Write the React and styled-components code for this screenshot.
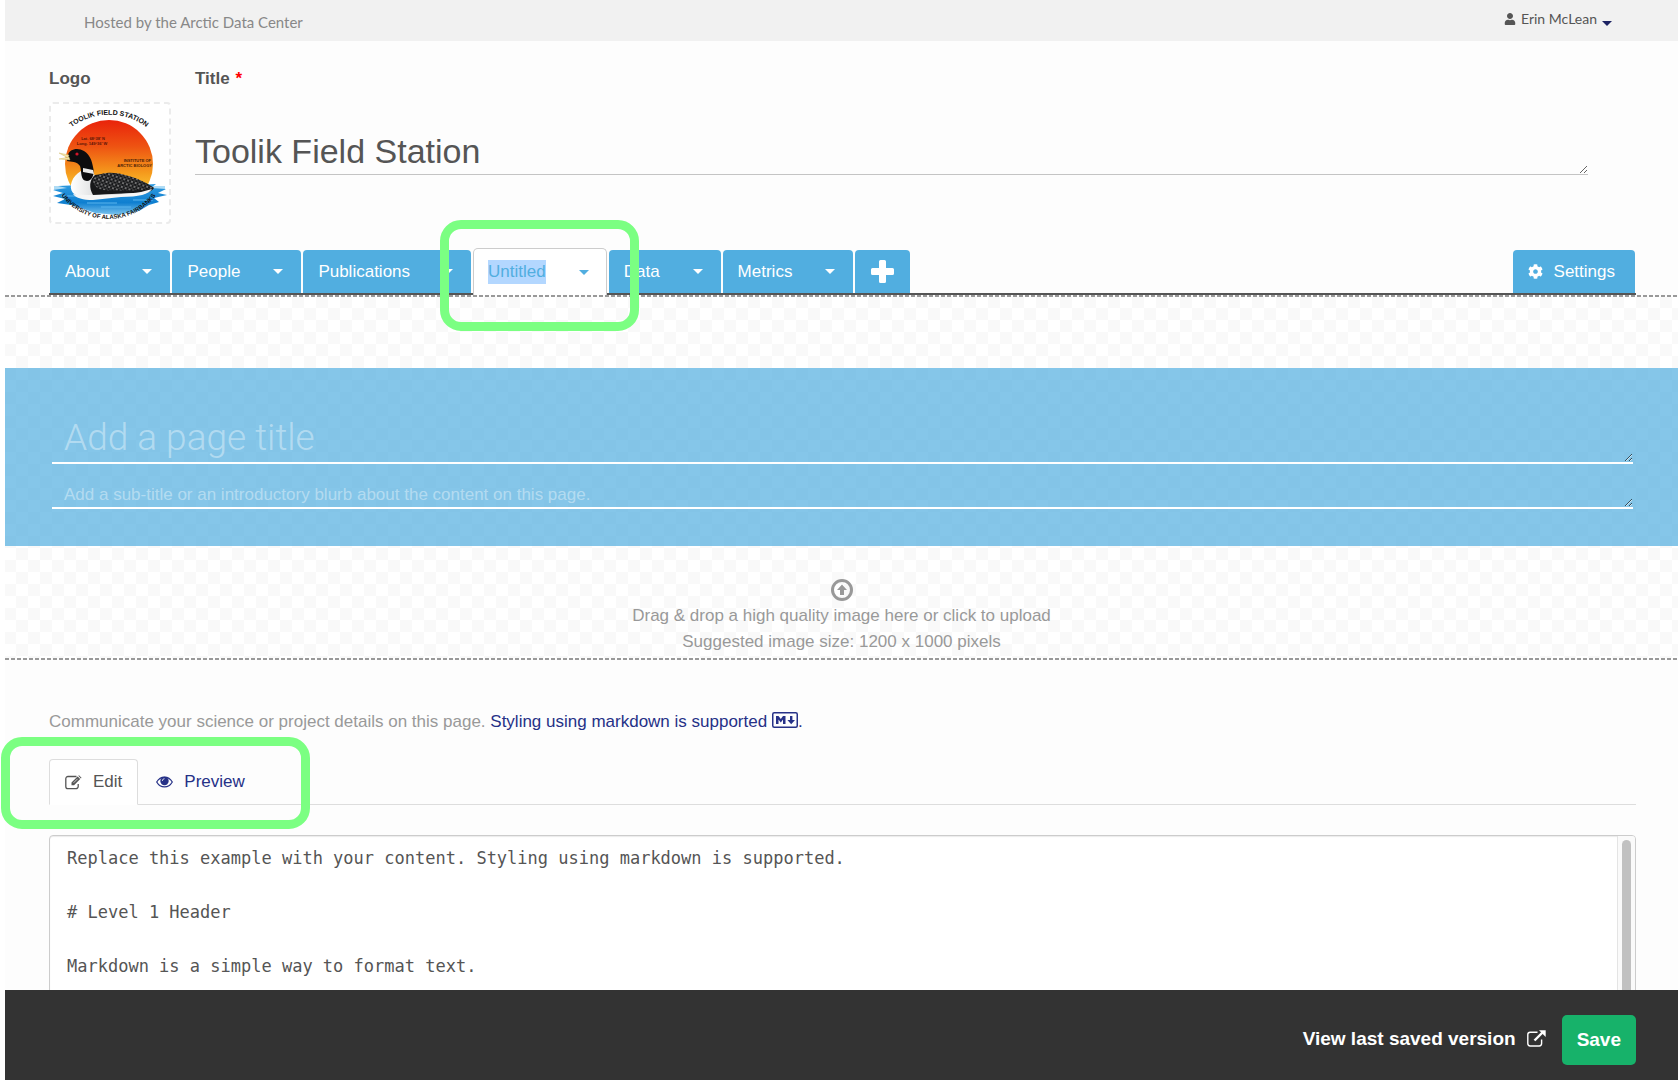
import React from "react";
import styled, { createGlobalStyle, css } from "styled-components";
import { FaUser, FaCog } from "react-icons/fa";

const sans = `"Liberation Sans", Arial, sans-serif`;
const humanist = `Lato, "Open Sans", sans-serif`;
const blue = "#51aee0";
const ink = "#555555";
const navy = "#263187";

const GlobalStyle = createGlobalStyle`
  *, *::before, *::after { box-sizing: border-box; }
  body {
    margin: 0;
    background: #fff;
    color: ${ink};
    font: 17px/24px ${sans};
  }
  button, textarea { font: inherit; }
  a { text-decoration: none; }
`;

const dashedLine = css`
  background-image: repeating-linear-gradient(90deg, #999 0 4px, transparent 4px 6px);
`;

const Page = styled.div`
  display: flex;
  flex-direction: column;
  height: 100vh;
  margin-left: 5px;
  background: #fdfdfd;
`;

const TopBar = styled.header`
  display: flex;
  flex: none;
  justify-content: space-between;
  align-items: center;
  height: 41px;
  padding: 0 66px 0 79px;
  background: #f1f1f1;
  font-family: ${humanist};
`;

const HostNote = styled.span`
  padding-top: 3px;
  font-size: 15px;
  color: #888;
`;

const UserMenu = styled.button`
  display: flex;
  align-items: center;
  gap: 5px;
  padding: 0 0 3px;
  border: 0;
  background: none;
  color: ${ink};
  font-size: 14px;
  line-height: 20px;
`;

const Caret = styled.span`
  width: 0;
  height: 0;
  border: 5px solid transparent;
  border-top-color: ${(p) => p.$color || "#fff"};
  border-bottom: 0;
  ${(p) => p.$low && "margin-top: 8px;"}
`;

const Main = styled.main`
  flex: 1;
  min-height: 0;
  margin-left: -5px;
  padding-left: 5px;
  overflow-y: auto;
  scrollbar-width: none;
`;

const Identity = styled.section`
  display: grid;
  grid-template-columns: 122px 1fr;
  column-gap: 24px;
  padding: 26px 90px 0 44px;
`;

const Field = styled.div`
  display: flex;
  flex-direction: column;
  gap: 11px;
`;

const Label = styled.label`
  font-weight: bold;
`;

const Required = styled.span`
  margin-left: 1px;
  color: #f00;
`;

const LogoDrop = styled.button`
  width: 122px;
  height: 122px;
  padding: 0;
  border: 2px dashed #ebebeb;
  border-radius: 4px;
  background: #fff;
  svg { display: block; width: 118px; height: 118px; }
`;

const TitleInput = styled.textarea`
  display: block;
  width: 100%;
  height: 73px;
  padding: 29px 0 0;
  border: 0;
  border-bottom: 1px solid #c4c4c4;
  background: transparent;
  color: ${ink};
  font-size: 34px;
  line-height: 40px;
  overflow: hidden;
  outline: 0;
  resize: vertical;
`;

const TabBar = styled.nav`
  display: flex;
  align-items: flex-end;
  gap: 2px;
  margin: 24px 42px 0 44px;
  padding: 0 1px;
  border-bottom: 2px solid #555;
`;

const Tab = styled.div`
  position: relative;
  display: flex;
  align-items: center;
  height: 43px;
  border-radius: 4px 4px 0 0;
  background: ${blue};
  color: #fff;
  ${(p) =>
    p.$active &&
    css`
      height: 47px;
      margin-bottom: -2px;
      border: 1px solid #ccc;
      border-bottom: 0;
      border-radius: 5px 5px 0 0;
      background: #fff;
      color: ${blue};
    `}
`;

const TabLink = styled.a`
  padding-left: ${(p) => (p.$active ? 14 : 15)}px;
  color: inherit;
`;

const Selected = styled.span`
  display: block;
  background: #b3d7ff;
`;

const TabToggle = styled.button`
  display: flex;
  align-items: center;
  height: 100%;
  padding: 0 ${(p) => (p.$active ? 17 : 18)}px 0 33px;
  border: 0;
  background: none;
`;

const TabAction = styled.button`
  display: flex;
  align-items: center;
  justify-content: center;
  gap: 11px;
  height: 43px;
  padding: ${(p) => (p.$push ? "0 20px 0 15px" : "0 16px")};
  ${(p) => p.$push && "margin-left: auto;"}
  border: 0;
  border-radius: 4px 4px 0 0;
  background: ${blue};
  color: #fff;
`;

const Highlight = styled.span`
  position: absolute;
  z-index: 2;
  border: 9px solid #7bff82;
  border-radius: 21px;
  pointer-events: none;
  ${(p) =>
    p.$tab
      ? "inset: -29px -33px -36px -34px;"
      : "left: -48px; top: -22px; width: 309px; height: 92px;"}
`;

const Hero = styled.section`
  padding-top: 71px;
  background: repeating-conic-gradient(#f9f9f9 0 25%, #fff 0 50%) 11px -1px / 24px 24px;
`;

const DashedRule = styled.div`
  height: 2px;
  ${dashedLine}
`;

const Banner = styled.div`
  display: flex;
  flex-direction: column;
  height: 178px;
  padding: 40px 45px 0 47px;
  background: rgba(81, 174, 224, 0.7);
`;

const BannerInput = styled.textarea`
  display: block;
  width: 100%;
  border: 0;
  border-bottom: 2px solid #fff;
  background: transparent;
  color: #fff;
  overflow: hidden;
  outline: 0;
  resize: vertical;
  &::placeholder { color: rgba(255, 255, 255, 0.4); opacity: 1; }
  ${(p) =>
    p.$large
      ? css`
          height: 56px;
          padding: 7px 12px 0;
          font: 300 37px/46px Roboto, ${sans};
        `
      : css`
          height: 45px;
          padding: 19px 12px 0;
          font-size: 17px;
          line-height: 24px;
        `}
`;

const Upload = styled.button`
  display: flex;
  flex-direction: column;
  align-items: center;
  width: 100%;
  padding: 33px 0 3px;
  border: 0;
  background: none;
  color: #999;
  line-height: 26px;
`;

const Content = styled.section`
  padding: 48px 42px 0 44px;
`;

const Help = styled.p`
  margin: 0;
  color: #999;
  line-height: 27px;
`;

const HelpLink = styled.a`
  color: ${navy};
  svg { vertical-align: -1px; }
`;

const EditorTabs = styled.div`
  position: relative;
  display: flex;
  margin: 24px 0 30px;
  border-bottom: 1px solid #ddd;
`;

const EditorTab = styled.button`
  display: flex;
  align-items: center;
  gap: 11px;
  height: 46px;
  margin-bottom: -1px;
  padding: 0 15px;
  border: 1px solid transparent;
  border-radius: 4px 4px 0 0;
  background: none;
  color: ${navy};
  ${(p) =>
    p.$active &&
    css`
      margin-right: 2px;
      border-color: #ddd;
      border-bottom-color: #fff;
      background: #fff;
      color: ${ink};
    `}
`;

const EditorFrame = styled.div`
  display: flex;
  height: 420px;
  border: 1px solid #ccc;
  border-radius: 4px;
  background: #fff;
  box-shadow: inset 0 1px 1px rgba(0, 0, 0, 0.08);
  overflow: hidden;
`;

const Editor = styled.textarea`
  flex: 1;
  padding: 9px 17px;
  border: 0;
  background: transparent;
  color: ${ink};
  font: 17px/27px "DejaVu Sans Mono", monospace;
  outline: 0;
  overflow-y: auto;
  scrollbar-width: none;
  resize: none;
`;

const ScrollTrack = styled.div`
  width: 18px;
  padding: 4px;
  border-left: 1px solid #e4e4e4;
  background: #fafafa;
`;

const ScrollThumb = styled.div`
  width: 9px;
  height: 60%;
  border-radius: 5px;
  background: #c1c1c1;
`;

const Footer = styled.footer`
  display: flex;
  flex: none;
  align-items: center;
  justify-content: flex-end;
  gap: 16px;
  height: 90px;
  padding: 10px 42px 0 0;
  background: #333;
  font-size: 19px;
  font-weight: bold;
`;

const SavedLink = styled.a`
  display: flex;
  align-items: center;
  gap: 11px;
  padding-bottom: 3px;
  color: #fff;
`;

const SaveButton = styled.button`
  height: 50px;
  padding: 0 15px;
  border: 0;
  border-radius: 5px;
  background: #17b26a;
  color: #fff;
`;

function StationLogo() {
  return (
    <svg viewBox="0 0 118 118" role="img" aria-label="Toolik Field Station logo">
      <defs>
        <linearGradient id="sun" x1="0" y1="0" x2="0" y2="1">
          <stop offset="0" stopColor="#e9230b" />
          <stop offset="0.3" stopColor="#ee5312" />
          <stop offset="0.6" stopColor="#f59a1c" />
          <stop offset="0.85" stopColor="#fbd23a" />
        </linearGradient>
        <linearGradient id="water" x1="0" y1="0" x2="0" y2="1">
          <stop offset="0" stopColor="#2f9be0" />
          <stop offset="0.6" stopColor="#0f7fd0" />
          <stop offset="1" stopColor="#7cc4ee" />
        </linearGradient>
        <linearGradient id="breast" x1="0" y1="0" x2="1" y2="0">
          <stop offset="0" stopColor="#ffffff" />
          <stop offset="1" stopColor="#8f9296" />
        </linearGradient>
        <pattern id="speckle" width="4" height="4" patternUnits="userSpaceOnUse" patternTransform="rotate(18)">
          <rect width="4" height="4" fill="#17181a" />
          <circle cx="1" cy="1" r="0.8" fill="#dcdcdc" />
          <circle cx="3" cy="3" r="0.6" fill="#a5a5a5" />
        </pattern>
        <path id="arcTop" d="M14 29 A62 62 0 0 1 102 29" />
        <path id="arcBottom" d="M5 83 A59 59 0 0 0 110 83" />
      </defs>
      <circle cx="58" cy="60" r="44" fill="url(#sun)" />
      <g>
        <path d="M3 82 H114 V86 H3 Z" fill="#7cc4ee" opacity="0.6" />
        <path d="M2 86 L16 84 L7 82 L30 81 L85 81 L105 80 L100 84 L115 85 L107 89 L116 91 L103 94 L108 98 L98 101 L88 107 L66 111 L44 109 L30 104 L20 101 L6 99 L14 95 L2 92 L12 89 Z" fill="url(#water)" />
        <path d="M10 92 H28 M82 96 H102 M36 99 H66 M50 103 H80" stroke="#5db6ee" strokeWidth="1" />
      </g>
      <path d="M30 67 C21 72 17 83 22 89 C29 95 42 94 56 93 L88 91 C96 90 101 87 103 83 L60 78 L42 70 Z" fill="url(#breast)" />
      <path d="M42 91 C38 84 38 76 44 71 C70 66 92 76 103 84 C100 89 90 89 80 89 Z" fill="#17181a" />
      <path d="M42 75 C48 68 62 67 74 71 C86 74 96 79 102 84 C92 87 68 87 52 86 C44 84 42 80 42 75 Z" fill="url(#speckle)" />
      <path d="M22 90 C36 92 70 91 90 88 L101 85 C98 90 88 93 70 93 L42 96 C32 96 25 94 22 90 Z" fill="#f6f6f6" />
      <path d="M17 51 C18 45 27 43 33 47 C39 51 41 57 42 63 C44 70 41 77 36 77 C29 77 31 68 29 62 C26 57 20 58 16 57 Z" fill="#0c0c0e" />
      <path d="M32 64 L42 66 L43 70 L32 68 Z" fill="#e9e9e9" />
      <path d="M8 49 L18 51 L17 54 Z M8 55 L18 53 L19 56 Z" fill="#f2e3a8" stroke="#c9b25a" strokeWidth="0.4" />
      <circle cx="26" cy="50" r="1.6" fill="#d4142a" />
      <g fontFamily="Liberation Sans, Arial, sans-serif" fontWeight="bold" fill="#111" textAnchor="middle">
        <text fontSize="7"><textPath href="#arcTop" startOffset="50%">TOOLIK FIELD STATION</textPath></text>
        <text fontSize="6"><textPath href="#arcBottom" startOffset="50%">UNIVERSITY OF ALASKA FAIRBANKS</textPath></text>
      </g>
      <g fontFamily="Liberation Sans, Arial, sans-serif" fontWeight="bold">
        <g fill="#5a1408" fontSize="4" textAnchor="middle">
          <text x="42" y="36">Lat. 68°38' N</text>
          <text x="41" y="41">Long. 149°36' W</text>
        </g>
        <g fill="#4a2008" fontSize="4" textAnchor="end">
          <text x="100" y="58">INSTITUTE OF</text>
          <text x="101" y="63">ARCTIC BIOLOGY</text>
        </g>
      </g>
    </svg>
  );
}

const UploadIcon = () => (
  <svg width="22" height="24" viewBox="0 0 22 24" aria-hidden="true">
    <circle cx="11" cy="11" r="9.5" fill="none" stroke="#999" strokeWidth="3" />
    <path d="M11 5.5 L16 11 H13 V16 H9 V11 H6 Z" fill="#999" />
  </svg>
);

const MarkdownIcon = () => (
  <svg width="26" height="16" viewBox="0 0 26 16" aria-label="Markdown">
    <rect x="0.75" y="0.75" width="24.5" height="14.5" rx="1.5" fill="none" stroke={navy} strokeWidth="1.5" />
    <path d="M4 12 V4 H6.5 L8.8 7 L11 4 H13.5 V12 H11 V7.6 L8.8 10.4 L6.5 7.6 V12 Z" fill={navy} />
    <path d="M18 4 H20.4 V8 H23 L19.2 12.3 L15.4 8 H18 Z" fill={navy} />
  </svg>
);

const EditIcon = () => (
  <svg width="17" height="15" viewBox="0 0 17 15" fill="none" stroke="currentColor" aria-hidden="true">
    <path d="M11.5 1.5 H3 A2.2 2.2 0 0 0 0.8 3.7 V11.5 A2.2 2.2 0 0 0 3 13.7 H11 A2.2 2.2 0 0 0 13.2 11.5 V9" strokeWidth="1.3" />
    <path d="M6.5 10.3 V7.6 L12.6 1.5 L15.2 4.1 L9.1 10.3 Z" fill="currentColor" stroke="none" />
    <path d="M13.3 0.8 L14 0.3 L16.5 2.8 L15.9 3.5 Z" fill="currentColor" stroke="none" />
    <path d="M8.6 7.8 L12.6 3.8" stroke="#fff" strokeWidth="0.7" />
  </svg>
);

const EyeIcon = () => (
  <svg width="17" height="12" viewBox="0 0 17 12" aria-hidden="true">
    <path d="M0.7 6 C4.5 -0.6 12.5 -0.6 16.3 6 C12.5 12.6 4.5 12.6 0.7 6 Z" fill="none" stroke="currentColor" strokeWidth="1.2" />
    <circle cx="8.5" cy="5" r="4.2" fill="currentColor" />
    <path d="M6.3 5 A2.3 2.3 0 0 1 8.5 2.7" fill="none" stroke="#fff" strokeWidth="0.8" />
  </svg>
);

const ExternalIcon = () => (
  <svg width="19" height="17" viewBox="0 0 19 17" fill="none" stroke="currentColor" aria-hidden="true">
    <path d="M10.5 2.2 H3.2 A2.4 2.4 0 0 0 0.8 4.6 V13.6 A2.4 2.4 0 0 0 3.2 16 H12.2 A2.4 2.4 0 0 0 14.6 13.6 V9.5" strokeWidth="1.4" />
    <path d="M7.5 10.5 L15.5 2.5" strokeWidth="2.4" />
    <path d="M12 0.3 H18.7 V7 Z" fill="currentColor" stroke="none" />
  </svg>
);

const PlusIcon = () => (
  <svg width="23" height="23" viewBox="0 0 23 23" aria-hidden="true">
    <path
      d="M9.5 0 H13.5 A1.5 1.5 0 0 1 15 1.5 V8 H21.5 A1.5 1.5 0 0 1 23 9.5 V13.5 A1.5 1.5 0 0 1 21.5 15 H15 V21.5 A1.5 1.5 0 0 1 13.5 23 H9.5 A1.5 1.5 0 0 1 8 21.5 V15 H1.5 A1.5 1.5 0 0 1 0 13.5 V9.5 A1.5 1.5 0 0 1 1.5 8 H8 V1.5 A1.5 1.5 0 0 1 9.5 0 Z"
      fill="#fff"
    />
  </svg>
);

const tabs = ["About", "People", "Publications", "Untitled", "Data", "Metrics"];

const markdown = `Replace this example with your content. Styling using markdown is supported.

# Level 1 Header

Markdown is a simple way to format text.
`;

export default function App() {
  return (
    <Page>
      <GlobalStyle />
      <TopBar>
        <HostNote>Hosted by the Arctic Data Center</HostNote>
        <UserMenu>
          <FaUser size={12} />
          Erin McLean
          <Caret $color="#1c2263" $low />
        </UserMenu>
      </TopBar>

      <Main>
        <Identity>
          <Field>
            <Label htmlFor="logo">Logo</Label>
            <LogoDrop id="logo">
              <StationLogo />
            </LogoDrop>
          </Field>
          <Field>
            <Label htmlFor="title">
              Title <Required>*</Required>
            </Label>
            <TitleInput id="title" defaultValue="Toolik Field Station" spellCheck={false} />
          </Field>
        </Identity>

        <TabBar>
          {tabs.map((name) => {
            const active = name === "Untitled";
            return (
              <Tab key={name} $active={active}>
                <TabLink href={`#${name}`} $active={active}>
                  {active ? <Selected>{name}</Selected> : name}
                </TabLink>
                <TabToggle aria-label={`${name} options`} $active={active}>
                  <Caret $color={active ? blue : "#fff"} />
                </TabToggle>
                {active && <Highlight $tab />}
              </Tab>
            );
          })}
          <TabAction aria-label="Add page">
            <PlusIcon />
          </TabAction>
          <TabAction $push>
            <FaCog size={15} />
            Settings
          </TabAction>
        </TabBar>

        <DashedRule />
        <Hero>
          <Banner>
            <BannerInput $large aria-label="Page title" placeholder="Add a page title" />
            <BannerInput
              aria-label="Page sub-title"
              placeholder="Add a sub-title or an introductory blurb about the content on this page."
            />
          </Banner>
          <Upload>
            <UploadIcon />
            <span>Drag &amp; drop a high quality image here or click to upload</span>
            <span>Suggested image size: 1200 x 1000 pixels</span>
          </Upload>
        </Hero>
        <DashedRule />

        <Content>
          <Help>
            Communicate your science or project details on this page.{" "}
            <HelpLink href="#markdown">
              Styling using markdown is supported <MarkdownIcon />.
            </HelpLink>
          </Help>
          <EditorTabs>
            <EditorTab $active>
              <EditIcon />
              Edit
            </EditorTab>
            <EditorTab>
              <EyeIcon />
              Preview
            </EditorTab>
            <Highlight />
          </EditorTabs>
          <EditorFrame>
            <Editor aria-label="Page content" defaultValue={markdown} spellCheck={false} />
            <ScrollTrack aria-hidden="true">
              <ScrollThumb />
            </ScrollTrack>
          </EditorFrame>
        </Content>
      </Main>

      <Footer>
        <SavedLink href="#view">
          View last saved version
          <ExternalIcon />
        </SavedLink>
        <SaveButton>Save</SaveButton>
      </Footer>
    </Page>
  );
}
